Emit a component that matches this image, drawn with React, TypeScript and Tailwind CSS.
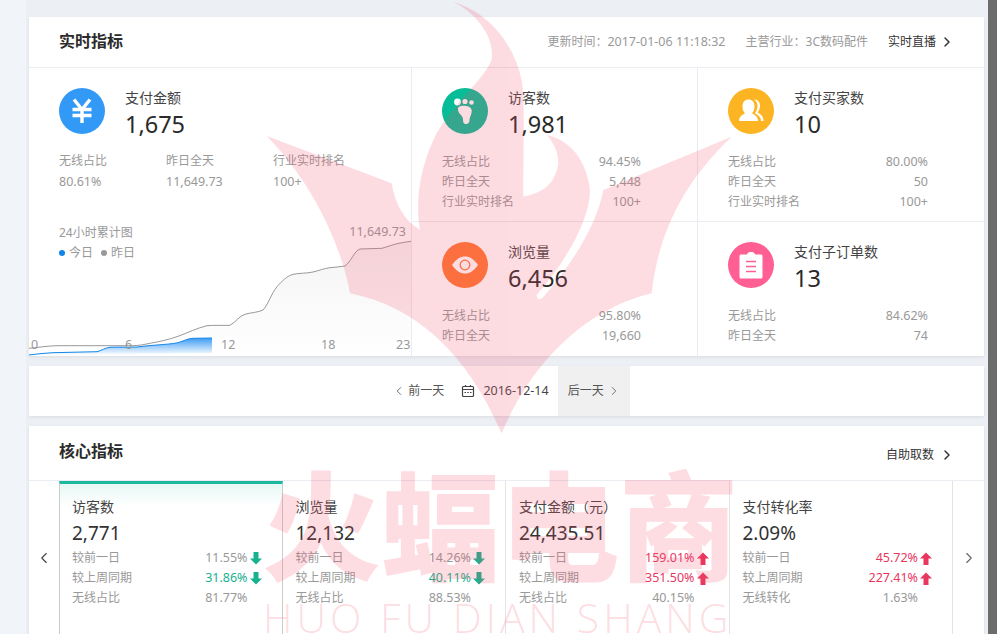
import { ChevronLeft, ChevronRight } from "lucide-react";
import React from "react";

type Stat = { label: string; value: string };

const greyLine =
  "M29 348.3C38 347.5 47 345.9 57 345.7L133 345.7C140 345.5 144 344.5 150 343.3C160 341.5 168 339.7 177 336.7C188 332.7 197 328 207 325.7C214 325 222 325.6 230 325.3C236 322 239 316 245 314.3C251 312.5 258 312.5 263 310C268 305 271 294 277 286.7C282 281 287 276 293 274.3C299 273 306 273.5 313 272C319 270.5 324 268.5 330 267.7C335 267 340 267 345 266C351 262 354 251 360 249C367 248.3 375 249 382 248.3C387 247 392 244.8 397 243.7C402 242.6 406 242 411 241.3";

const blueLine =
  "M29 355C37 354 45 353 53 352.7L97 351.7C102 350.5 105 347.8 110 347.3C118 346.8 128 347.5 137 347C144 346 150 345.6 157 345C164 344.4 172 344 178 342.7C184 341 187 338.7 193 338.3L212 338";

function YenIcon() {
  return (
    <svg viewBox="0 0 46 46" className="w-[46px] h-[46px]" fill="none" stroke="#fff" strokeWidth="3.4">
      <path d="M15 11.5L23 21.5L31 11.5" />
      <path d="M13.5 21.5H32.5M13.5 27.5H32.5M23 21.5V35" />
    </svg>
  );
}

function FootIcon() {
  return (
    <svg viewBox="0 0 46 46" className="w-[46px] h-[46px]" fill="#fff">
      <circle cx="15.5" cy="14" r="3.4" />
      <circle cx="23" cy="13.5" r="2.6" />
      <circle cx="29.5" cy="14.5" r="2.3" />
      <path d="M16 21C16 18 20 17.5 24 18C28.5 18.5 30.5 21 29.5 25C28.8 28 27.5 29.5 27.5 32C27.5 35 25.5 36.5 23.5 36C21 35.5 21 33 21 31C21 27.5 16 26 16 21Z" />
    </svg>
  );
}

function UsersIcon() {
  return (
    <svg viewBox="0 0 46 46" className="w-[46px] h-[46px]" fill="#fff">
      <path d="M11 33C11 28.5 14 27 17 25.5C15.5 23.5 14.5 21.5 14.5 18.5C14.5 14 17 11.5 20.5 11.5C24 11.5 26.5 14 26.5 18.5C26.5 21.5 25.5 23.5 24 25.5C27 27 30 28.5 30 33Z" />
      <path d="M26 11.5C29.5 11 32 14 32 18C32 20.5 31 22.5 29.5 24.5C32.5 26 35.5 28 35.5 33H33C33 29.5 30.5 27 27 25.5C28.5 23 29.5 21 29.5 18C29.5 15 28.5 13 26 11.5Z" />
    </svg>
  );
}

function EyeIcon() {
  return (
    <svg viewBox="0 0 46 46" className="w-[46px] h-[46px]">
      <path d="M10 23C14 17 18.5 14.5 23 14.5C27.5 14.5 32 17 36 23C32 29 27.5 31.5 23 31.5C18.5 31.5 14 29 10 23Z" fill="#fff" />
      <circle cx="23" cy="23" r="4.8" fill="#fff" stroke="#ff7733" strokeWidth="1.3" />
    </svg>
  );
}

function ClipIcon() {
  return (
    <svg viewBox="0 0 46 46" className="w-[46px] h-[46px]">
      <path d="M13 12.5H19C19.5 10.5 21 10 23 10C25 10 26.5 10.5 27 12.5H33C33.8 12.5 34.5 13.2 34.5 14V35C34.5 35.8 33.8 36.5 33 36.5H13C12.2 36.5 11.5 35.8 11.5 35V14C11.5 13.2 12.2 12.5 13 12.5Z" fill="#fff" />
      <path d="M18 19.5H28M18 24.5H28M18 29.5H28" stroke="#ff5f92" strokeWidth="1.6" />
    </svg>
  );
}

function Arrow({ up }: { up?: boolean }) {
  return (
    <svg viewBox="0 0 12 13" className="w-[12px] h-[13px] ml-[2px]" fill={up ? "#e8365f" : "#16b28f"}>
      {up ? <path d="M6 0.5L12 6.5H8.5V13H3.5V6.5H0Z" /> : <path d="M6 12.5L12 6.5H8.5V0H3.5V6.5H0Z" />}
    </svg>
  );
}

function Metric({
  icon,
  color,
  label,
  value,
  stats,
  border,
}: {
  icon: React.ReactNode;
  color: string;
  label: string;
  value: string;
  stats: Stat[];
  border?: string;
}) {
  return (
    <div className={`pl-[30px] pr-[56px] pt-[20px] ${border ?? ""}`}>
      <div className="flex">
        <div className={`w-[46px] h-[46px] rounded-full ${color}`}>{icon}</div>
        <div className="ml-[20px]">
          <div className="text-[14px] leading-[20px] text-[#444]">{label}</div>
          <div className="text-[23.5px] leading-[30px] mt-[1px] text-[#2a2a2a]">{value}</div>
        </div>
      </div>
      <div className="mt-[13px] text-[12.5px] leading-[20px] text-[#999]">
        {stats.map((s) => (
          <div key={s.label} className="flex justify-between">
            <span className="text-[12px]">{s.label}</span>
            <span>{s.value}</span>
          </div>
        ))}
      </div>
    </div>
  );
}

function Core({
  label,
  value,
  a,
  b,
  c,
  cLabel,
  up,
  active,
}: {
  label: string;
  value: string;
  a: string;
  b: string;
  c: string;
  cLabel: string;
  up?: boolean;
  active?: boolean;
}) {
  return (
    <div
      className={`w-[223.5px] h-[154px] shrink-0 border-r border-[#e4e4e4] pr-[20px] ${
        active
          ? "pl-[12px] pt-[13px] border-t-[3px] border-t-[#1cb9a0] border-l border-l-[#ccc] border-r-[#ccc] bg-gradient-to-b from-[#e6f8f5] to-white to-[22px]"
          : "pl-[13px] pt-[16px]"
      }`}
    >
      <div className="text-[14px] leading-[20px] text-[#444]">{label}</div>
      <div className="text-[19px] leading-[28px] mt-[2px] text-[#333]">{value}</div>
      <div className="mt-[1px] text-[12.5px] leading-[20px] text-[#999]">
        <div className="flex items-center justify-between">
          <span className="text-[12px]">较前一日</span>
          <span className={`flex items-center ${up ? "text-[#e8365f]" : ""}`}>
            {a}
            <Arrow up={up} />
          </span>
        </div>
        <div className="flex items-center justify-between">
          <span className="text-[12px]">较上周同期</span>
          <span className={`flex items-center ${up ? "text-[#e8365f]" : "text-[#16b28f]"}`}>
            {b}
            <Arrow up={up} />
          </span>
        </div>
        <div className="flex items-center justify-between">
          <span className="text-[12px]">{cLabel}</span>
          <span className="pr-[14px]">{c}</span>
        </div>
      </div>
    </div>
  );
}

export default function App() {
  return (
    <div className="relative w-[997px] h-[634px] overflow-hidden flex bg-[#eceff4] font-['Noto_Sans','Noto_Sans_CJK_SC',sans-serif]">
      <div className="w-[26px] h-full bg-[#f1f4f8]" />

      {/* Main column */}
      <div className="ml-[3px] w-[955px] pt-[17px] flex flex-col gap-[10px] shrink-0">
        {/* Realtime */}
        <section className="bg-white shadow-[0_1px_3px_rgba(0,0,0,0.08)] h-[339px] shrink-0 flex flex-col">
          <header className="h-[51px] shrink-0 border-b border-[#e9ecf0] pl-[30px] pr-[29px] flex items-center justify-between">
            <h2 className="text-[16px] font-bold text-[#2b2b2b] mb-[2px]">实时指标</h2>
            <div className="flex items-center text-[12px] text-[#999]">
              <span>
                更新时间：<span className="text-[12.5px]">2017-01-06 11:18:32</span>
              </span>
              <span className="ml-[20px]">主营行业：3C数码配件</span>
              <span className="ml-[20px] text-[#333]">实时直播</span>
              <ChevronRight className="ml-[3px] w-[16px] h-[16px] text-[#333]" strokeWidth={2.2} />
            </div>
          </header>

          <div className="flex-1 flex">
            {/* Left cell with chart */}
            <div className="relative w-[383px] shrink-0 border-r border-[#e9ecf0] pl-[30px] pt-[20px]">
              <div className="flex">
                <div className="w-[46px] h-[46px] rounded-full bg-[#3399f7]">
                  <YenIcon />
                </div>
                <div className="ml-[20px]">
                  <div className="text-[14px] leading-[20px] text-[#444]">支付金额</div>
                  <div className="text-[23.5px] leading-[30px] mt-[1px] text-[#2a2a2a]">1,675</div>
                </div>
              </div>
              <div className="mt-[11px] flex text-[12.5px] leading-[21px] text-[#999]">
                <div className="w-[107px]">
                  <div className="text-[12px]">无线占比</div>
                  <div>80.61%</div>
                </div>
                <div className="w-[107px]">
                  <div className="text-[12px]">昨日全天</div>
                  <div>11,649.73</div>
                </div>
                <div>
                  <div className="text-[12px]">行业实时排名</div>
                  <div>100+</div>
                </div>
              </div>
              <div className="mt-[31px] text-[12px] leading-[20px] text-[#999]">
                <div>24小时累计图</div>
                <div className="flex items-center">
                  <span className="w-[6px] h-[6px] rounded-full bg-[#0f84ea]" />
                  <span className="ml-[4px]">今日</span>
                  <span className="ml-[8px] w-[6px] h-[6px] rounded-full bg-[#999]" />
                  <span className="ml-[4px]">昨日</span>
                </div>
              </div>
              <svg viewBox="29 210 382 146" className="absolute left-0 bottom-0 w-[382px] h-[146px]">
                <defs>
                  <linearGradient id="greyFill" x1="0" y1="0" x2="0" y2="1">
                    <stop offset="0" stopColor="#f4f4f4" />
                    <stop offset="1" stopColor="#ffffff" />
                  </linearGradient>
                  <linearGradient id="blueFill" x1="0" y1="0" x2="0" y2="1">
                    <stop offset="0" stopColor="#3d9cf5" />
                    <stop offset="1" stopColor="#ffffff" />
                  </linearGradient>
                </defs>
                <path d={`${greyLine}L411 356L29 356Z`} fill="url(#greyFill)" />
                <path d={greyLine} fill="none" stroke="#999" strokeWidth="1" />
                <path d={`${blueLine}L212 353L29 355Z`} fill="url(#blueFill)" />
                <path d={blueLine} fill="none" stroke="#1487e8" strokeWidth="1" />
                <g fill="#999" fontSize="12.5">
                  <text x="406" y="236" textAnchor="end">11,649.73</text>
                  <text x="31" y="349">0</text>
                  <text x="125" y="349">6</text>
                  <text x="221" y="349">12</text>
                  <text x="321" y="349">18</text>
                  <text x="396" y="349">23</text>
                </g>
              </svg>
            </div>

            {/* Four small metrics */}
            <div className="flex-1 grid grid-cols-[286px_286px] grid-rows-[154px_134px]">
              <Metric
                border="border-r border-b border-[#e9ecf0]"
                color="bg-[#07bd98]"
                icon={<FootIcon />}
                label="访客数"
                value="1,981"
                stats={[
                  { label: "无线占比", value: "94.45%" },
                  { label: "昨日全天", value: "5,448" },
                  { label: "行业实时排名", value: "100+" },
                ]}
              />
              <Metric
                border="border-b border-[#e9ecf0]"
                color="bg-[#fdb423]"
                icon={<UsersIcon />}
                label="支付买家数"
                value="10"
                stats={[
                  { label: "无线占比", value: "80.00%" },
                  { label: "昨日全天", value: "50" },
                  { label: "行业实时排名", value: "100+" },
                ]}
              />
              <Metric
                border="border-r border-[#e9ecf0]"
                color="bg-[#ff7733]"
                icon={<EyeIcon />}
                label="浏览量"
                value="6,456"
                stats={[
                  { label: "无线占比", value: "95.80%" },
                  { label: "昨日全天", value: "19,660" },
                ]}
              />
              <Metric
                color="bg-[#ff5f92]"
                icon={<ClipIcon />}
                label="支付子订单数"
                value="13"
                stats={[
                  { label: "无线占比", value: "84.62%" },
                  { label: "昨日全天", value: "74" },
                ]}
              />
            </div>
          </div>
        </section>

        {/* Date nav */}
        <section className="bg-white shadow-[0_1px_3px_rgba(0,0,0,0.08)] h-[50px] shrink-0 flex items-center justify-center pl-[9px] text-[12px] text-[#555]">
          <ChevronLeft className="w-[14px] h-[14px]" strokeWidth={1.4} />
          <span className="ml-[2px]">前一天</span>
          <svg viewBox="0 0 14 14" className="ml-[17px] w-[14px] h-[14px]" fill="none" stroke="#444" strokeWidth="1.2">
            <rect x="1.5" y="2.5" width="11" height="10" rx="1" />
            <path d="M1.5 5.5H12.5M4.5 1V3M9.5 1V3" />
            <path d="M3.5 8.5H5M6.3 8.5H7.8M9 8.5H10.5" />
          </svg>
          <span className="ml-[8px] text-[12.5px] text-[#444]">2016-12-14</span>
          <div className="ml-[9px] w-[72px] h-[50px] bg-[#f0f0f0] flex items-center pl-[10px]">
            <span>后一天</span>
            <ChevronRight className="ml-[3px] w-[14px] h-[14px]" strokeWidth={1.4} />
          </div>
        </section>

        {/* Core metrics */}
        <section className="bg-white shadow-[0_1px_3px_rgba(0,0,0,0.08)] flex-1 flex flex-col">
          <header className="h-[55px] shrink-0 border-b border-[#e9ecf0] pl-[30px] pr-[29px] flex items-center justify-between">
            <h2 className="text-[16px] font-bold text-[#2b2b2b] mb-[4px]">核心指标</h2>
            <div className="flex items-center text-[12px] text-[#333] mt-[4px]">
              <span>自助取数</span>
              <ChevronRight className="ml-[5px] w-[16px] h-[16px]" strokeWidth={2.2} />
            </div>
          </header>
          <div className="flex">
            <div className="w-[30px] h-[154px] shrink-0 flex items-center justify-center">
              <ChevronLeft className="w-[18px] h-[18px] text-[#444]" strokeWidth={1.5} />
            </div>
            <Core active label="访客数" value="2,771" a="11.55%" b="31.86%" c="81.77%" cLabel="无线占比" />
            <Core label="浏览量" value="12,132" a="14.26%" b="40.11%" c="88.53%" cLabel="无线占比" />
            <Core up label="支付金额（元）" value="24,435.51" a="159.01%" b="351.50%" c="40.15%" cLabel="无线占比" />
            <Core up label="支付转化率" value="2.09%" a="45.72%" b="227.41%" c="1.63%" cLabel="无线转化" />
            <div className="flex-1 h-[154px] flex items-center justify-center">
              <ChevronRight className="w-[18px] h-[18px] text-[#666]" strokeWidth={1.5} />
            </div>
          </div>
        </section>
      </div>

      {/* Window edge */}
      <div className="ml-auto w-[9px] h-full bg-[#6c6c6c]" />

      {/* Watermark */}
      <svg viewBox="0 0 997 634" className="absolute inset-0 w-[997px] h-[634px] pointer-events-none">
        <g transform="translate(250 0) scale(0.3333)" opacity="0.2" fill="#f5506e" fillRule="evenodd">
          <path d="M50 408L425 550C435 610 460 660 510 690C495 600 510 500 560 400C620 300 700 240 725 180C735 110 680 40 610 5C720 40 790 130 815 240C825 300 820 400 820 590C870 580 915 560 925 490C925 450 905 420 890 405C960 420 1010 480 1020 570C1020 650 960 770 860 885Q862 905 878 893C960 800 1040 680 1060 570L1445 410C1330 520 1230 660 1205 880C1080 910 880 1010 755 1300C650 1060 500 920 300 880C280 760 200 560 50 408Z" />
          <path d="M745 210C680 310 565 480 565 640C565 720 620 820 640 888Q650 905 658 885C610 780 590 700 590 620C590 480 720 330 745 210Z" />
        </g>
      </svg>
      <div className="absolute left-[262px] top-[458px] pointer-events-none text-[#f5506e]/20 text-[119px] leading-[137px] font-black whitespace-nowrap">
        火蝠电商
      </div>
      <div className="absolute left-[263px] top-[589px] pointer-events-none text-[#f5506e]/20 text-[41px] leading-[56px] font-light tracking-[4px] font-['Open_Sans',sans-serif] whitespace-nowrap">
        HUO FU DIAN SHANG
      </div>
    </div>
  );
}
